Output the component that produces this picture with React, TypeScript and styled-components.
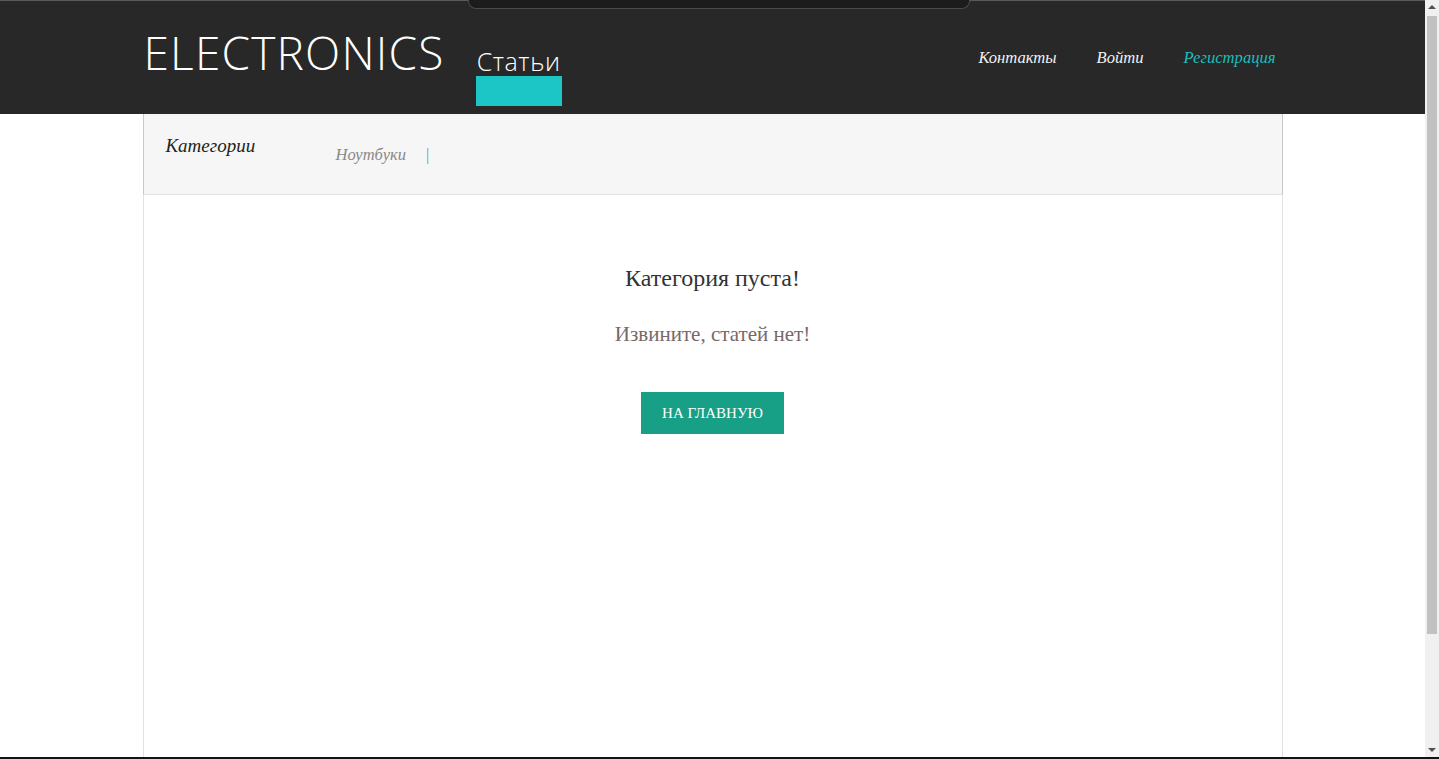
import React from "react";
import styled, { createGlobalStyle } from "styled-components";

const Global = createGlobalStyle`
  html, body { margin: 0; padding: 0; height: 100%; overflow: hidden; background: #fff; }
  #root { height: 100%; }
  * { box-sizing: border-box; }
`;

const Frame = styled.div`
  height: 100vh;
  display: flex;
  flex-direction: column;
`;

const Viewport = styled.div`
  flex: 1;
  display: flex;
  min-height: 0;
  position: relative;
`;

const Page = styled.div`
  flex: 1;
  display: flex;
  flex-direction: column;
  min-width: 0;
`;

const Header = styled.header`
  background: #282828;
  border-top: 1px solid #5a5a5a;
  height: 114px;
`;

const Container = styled.div`
  width: 1140px;
  margin: 0 auto;
`;

const HeaderInner = styled(Container)`
  display: flex;
  align-items: flex-start;
  height: 100%;
`;

const Logo = styled.a`
  font-family: "Open Sans", sans-serif;
  font-weight: 300;
  font-size: 46px;
  letter-spacing: 1.2px;
  color: #fff;
  line-height: 1;
  margin: 28px 0 0 1px;
  text-decoration: none;
`;

const MainNavItem = styled.a`
  display: flex;
  flex-direction: column;
  margin: 46px 0 0 31px;
  text-decoration: none;
  font-family: "Open Sans", sans-serif;
  font-weight: 300;
  font-size: 25px;
  letter-spacing: 0.6px;
  color: #fff;
  line-height: 29px;
`;

const ActiveBar = styled.span`
  display: block;
  height: 30px;
  background: #1dc6c6;
`;

const NavLabel = styled.span`
  padding: 0 1px;
`;

const UserNav = styled.nav`
  margin-left: auto;
  margin-right: 7px;
  margin-top: 46px;
  display: flex;
  gap: 40px;
`;

const UserLink = styled.a<{ $accent?: boolean }>`
  font-family: "Liberation Serif", serif;
  font-style: italic;
  font-size: 16.6px;
  color: ${(p) => (p.$accent ? "#1dbdbd" : "#f2f2f2")};
  text-decoration: none;
  line-height: 22px;
`;

const Body = styled(Container)`
  flex: 1;
  display: flex;
  flex-direction: column;
  border-left: 1px solid #e2e2e2;
  border-right: 1px solid #e2e2e2;
`;

const CategoryBar = styled.div`
  height: 81px;
  background: #f6f6f6;
  border-left: 1px solid #c8c8c8;
  border-right: 1px solid #c8c8c8;
  border-bottom: 1px solid #e0e0e0;
  margin: 0 -1px;
  display: flex;
  align-items: flex-start;
  padding-left: 22px;
`;

const CategoryTitle = styled.span`
  font-family: "Liberation Serif", serif;
  font-style: italic;
  font-size: 19px;
  line-height: 22px;
  color: #222;
  margin-top: 21px;
  width: 170px;
`;

const CategoryLink = styled.a`
  font-family: "Liberation Serif", serif;
  font-style: italic;
  font-size: 16.5px;
  line-height: 20px;
  color: #888;
  margin-top: 31px;
  text-decoration: none;
`;

const Divider = styled.span`
  font-family: "Liberation Serif", serif;
  font-size: 16px;
  line-height: 20px;
  color: #6b8fd6;
  margin: 31px 0 0 20px;
`;

const Empty = styled.div`
  display: flex;
  flex-direction: column;
  align-items: center;
  padding-top: 68px;
`;

const EmptyTitle = styled.h3`
  margin: 0;
  font-family: "Liberation Serif", serif;
  font-weight: 400;
  font-size: 24px;
  line-height: 30px;
  color: #333;
`;

const EmptyText = styled.p`
  margin: 28px 0 0;
  font-family: "Liberation Serif", serif;
  font-size: 21px;
  line-height: 26px;
  color: #786868;
`;

const HomeButton = styled.a`
  margin-top: 45px;
  width: 143px;
  height: 42px;
  display: flex;
  align-items: center;
  justify-content: center;
  background: #17a086;
  color: #fff;
  font-family: "Liberation Serif", serif;
  font-size: 15px;
  text-decoration: none;
`;

const Scrollbar = styled.div`
  width: 14px;
  background: #f0f0f0;
  display: flex;
  flex-direction: column;
  align-items: center;
`;

const Arrow = styled.div<{ $down?: boolean }>`
  height: 14px;
  display: flex;
  align-items: center;
  justify-content: center;
  &::before {
    content: "";
    border-left: 4px solid transparent;
    border-right: 4px solid transparent;
    ${(p) => (p.$down ? "border-top: 4px solid #505050;" : "border-bottom: 4px solid #505050;")}
  }
`;

const Thumb = styled.div`
  width: 10px;
  height: 618px;
  margin-top: 2px;
  background: #c1c1c1;
`;

const Spacer = styled.div`
  flex: 1;
`;

const Notch = styled.div`
  position: absolute;
  top: 0;
  left: 468px;
  width: 502px;
  height: 9px;
  background: #1c1c1c;
  border: 1px solid #4a4a4a;
  border-top: none;
  border-radius: 0 0 8px 8px;
`;

const BottomEdge = styled.div`
  height: 2px;
  background: #141214;
`;

export default function App() {
  return (
    <>
      <Global />
      <Frame>
        <Viewport>
          <Page>
            <Header>
              <HeaderInner>
                <Logo href="#">ELECTRONICS</Logo>
                <MainNavItem href="#">
                  <NavLabel>Статьи</NavLabel>
                  <ActiveBar />
                </MainNavItem>
                <UserNav>
                  <UserLink href="#">Контакты</UserLink>
                  <UserLink href="#">Войти</UserLink>
                  <UserLink href="#" $accent>
                    Регистрация
                  </UserLink>
                </UserNav>
              </HeaderInner>
            </Header>
            <Body>
              <CategoryBar>
                <CategoryTitle>Категории</CategoryTitle>
                <CategoryLink href="#">Ноутбуки</CategoryLink>
                <Divider>|</Divider>
              </CategoryBar>
              <Empty>
                <EmptyTitle>Категория пуста!</EmptyTitle>
                <EmptyText>Извините, статей нет!</EmptyText>
                <HomeButton href="#">НА ГЛАВНУЮ</HomeButton>
              </Empty>
            </Body>
          </Page>
          <Scrollbar>
            <Arrow />
            <Thumb />
            <Spacer />
            <Arrow $down />
          </Scrollbar>
          <Notch />
        </Viewport>
        <BottomEdge />
      </Frame>
    </>
  );
}
